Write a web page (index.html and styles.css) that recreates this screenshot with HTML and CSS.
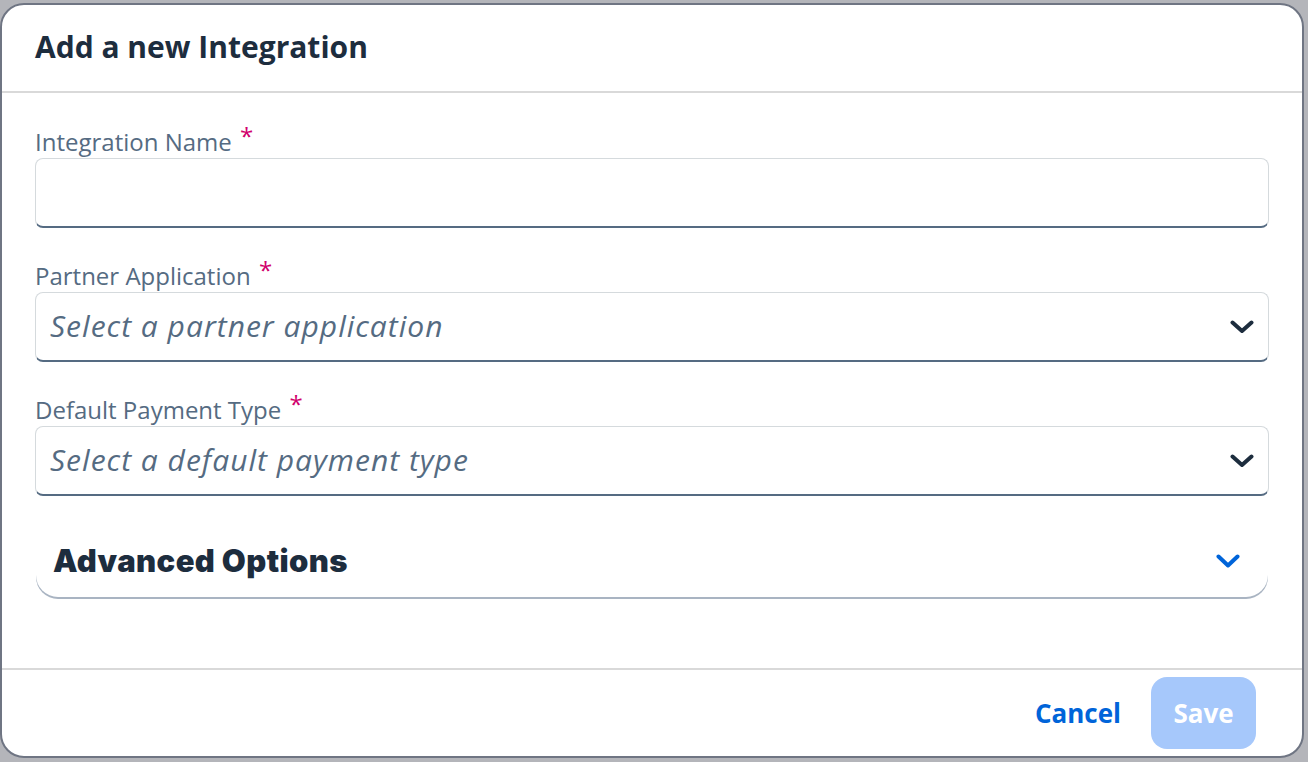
FILE: index.html
```html
<!DOCTYPE html>
<html lang="en">
<head>
<meta charset="utf-8">
<title>Add a new Integration</title>
<link rel="stylesheet" href="styles.css">
</head>
<body>
<div class="dialog">
  <header class="dialog-header">
    <h1 class="dialog-title">Add a new Integration</h1>
  </header>
  <main class="dialog-body">
    <div class="field">
      <label class="field-label">Integration Name <span class="req">*</span></label>
      <div class="input"></div>
    </div>
    <div class="field">
      <label class="field-label">Partner Application <span class="req">*</span></label>
      <div class="input select">
        <span class="placeholder">Select a partner application</span>
        <svg class="chev" width="24" height="14" viewBox="0 0 24 14"><path d="M2.5 2.5 L12 11 L21.5 2.5" fill="none" stroke="#1d2d3e" stroke-width="4" stroke-linecap="round" stroke-linejoin="round"/></svg>
      </div>
    </div>
    <div class="field">
      <label class="field-label">Default Payment Type <span class="req">*</span></label>
      <div class="input select">
        <span class="placeholder">Select a default payment type</span>
        <svg class="chev" width="24" height="14" viewBox="0 0 24 14"><path d="M2.5 2.5 L12 11 L21.5 2.5" fill="none" stroke="#1d2d3e" stroke-width="4" stroke-linecap="round" stroke-linejoin="round"/></svg>
      </div>
    </div>
    <div class="panel">
      <span class="panel-title">Advanced Options</span>
      <svg class="chev" width="24" height="15" viewBox="0 0 24 15"><path d="M2.5 2.5 L12 11.5 L21.5 2.5" fill="none" stroke="#0064d9" stroke-width="4" stroke-linecap="round" stroke-linejoin="round"/></svg>
    </div>
  </main>
  <footer class="dialog-footer">
    <button class="btn-cancel">Cancel</button>
    <button class="btn-save">Save</button>
  </footer>
</div>
</body>
</html>
```
FILE: styles.css
```css
html, body {
  margin: 0;
  padding: 0;
}
body {
  background: #b4b5ba;
  font-family: "Open Sans", "Noto Sans", sans-serif;
  height: 762px;
  overflow: hidden;
}
.dialog {
  box-sizing: border-box;
  margin-top: 3px;
  width: 1304px;
  height: 755px;
  border: 2px solid #6f7583;
  border-radius: 24px;
  background: #fff;
  display: flex;
  flex-direction: column;
  overflow: hidden;
}
.dialog-header {
  height: 86px;
  flex: none;
  border-bottom: 2px solid #d9d9d9;
  display: flex;
  align-items: center;
  padding-left: 33px;
}
.dialog-title {
  margin: 0;
  font-size: 30px;
  font-weight: 700;
  color: #1d2d3e;
  line-height: 1;
  padding-bottom: 2px;
}
.dialog-body {
  flex: 1;
  padding: 34px 33px 0 33px;
  display: flex;
  flex-direction: column;
}
.field {
  display: flex;
  flex-direction: column;
  margin-bottom: 33px;
}
.field-label {
  font-size: 24px;
  line-height: 30px;
  height: 31px;
  color: #556b82;
}
.req {
  color: #d1006c;
  font-size: 24px;
  position: relative;
  top: -6px;
  margin-left: 2px;
}
.input {
  box-sizing: border-box;
  height: 70px;
  width: 1234px;
  border: 1px solid #d5dadd;
  border-bottom: 2px solid #556b82;
  border-radius: 8px;
  background: #fff;
}
.select {
  display: flex;
  align-items: center;
  justify-content: space-between;
  padding: 0 14px 0 14px;
}
.placeholder {
  font-style: italic;
  font-size: 30px;
  letter-spacing: 1px;
  color: #556b82;
  padding-bottom: 2px;
}
.panel {
  margin-top: -4px;
  box-sizing: border-box;
  height: 72px;
  width: 1232px;
  margin-left: 1px;
  display: flex;
  align-items: center;
  justify-content: space-between;
  padding: 0 28px 0 17px;
  border-radius: 0 0 22px 22px;
  box-shadow: 0 2px 0 0 #a9b4c2;
}
.panel-title {
  font-family: "Inter", "Lato", sans-serif;
  font-weight: 900;
  font-size: 31px;
  letter-spacing: 0.4px;
  color: #1d2d3e;
  padding-bottom: 2px;
}
.dialog-footer {
  height: 86px;
  flex: none;
  border-top: 2px solid #d9d9d9;
  display: flex;
  align-items: center;
  justify-content: flex-end;
  padding-right: 46px;
  gap: 30px;
}
.btn-cancel {
  border: none;
  background: none;
  padding: 0;
  font-family: "Open Sans", sans-serif;
  font-size: 26px;
  font-weight: 700;
  color: #0064d9;
}
.btn-save {
  border: none;
  width: 105px;
  height: 72px;
  border-radius: 16px;
  background: #a6c8fb;
  color: #fff;
  font-family: "Open Sans", sans-serif;
  font-size: 26px;
  font-weight: 700;
  padding: 0;
}
```
